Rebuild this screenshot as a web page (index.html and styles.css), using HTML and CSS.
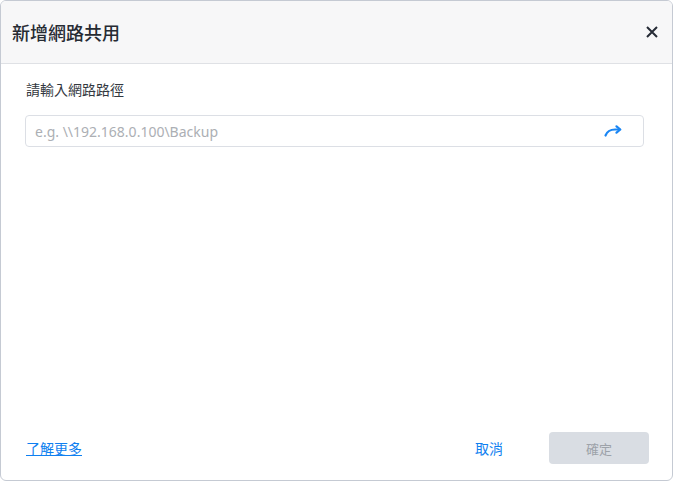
FILE: index.html
```html
<!DOCTYPE html>
<html lang="zh-Hant">
<head>
<meta charset="utf-8">
<title>新增網路共用</title>
<link rel="stylesheet" href="styles.css">
</head>
<body>
<div class="dialog">
  <div class="header">
    <div class="title">新增網路共用</div>
    <button class="close" aria-label="close">
      <svg width="12" height="12" viewBox="0 0 12 12"><path d="M1 1L11 11M11 1L1 11" stroke="#262b36" stroke-width="2" fill="none"/></svg>
    </button>
  </div>
  <div class="body">
    <div class="label">請輸入網路路徑</div>
    <div class="input">
      <span class="placeholder">e.g. \\192.168.0.100\Backup</span>
      <svg class="go" width="18" height="12" viewBox="0 0 18 12"><path d="M1.5 10.5C3 6.5 6 4.5 11 4.5H15.5" stroke="#1a86f4" stroke-width="2.2" fill="none" stroke-linecap="round"/><path d="M12.5 1.3L16.3 4.5L12.5 7.7" stroke="#1a86f4" stroke-width="2.2" fill="none" stroke-linecap="round" stroke-linejoin="round"/></svg>
    </div>
  </div>
  <div class="footer">
    <a class="more" href="#">了解更多</a>
    <div class="actions">
      <button class="cancel">取消</button>
      <button class="ok">確定</button>
    </div>
  </div>
</div>
</body>
</html>
```

FILE: styles.css
```css
html, body {
  margin: 0;
  padding: 0;
  background: #ffffff;
}
body {
  font-family: "Noto Sans", "Noto Sans CJK TC", sans-serif;
}
.dialog {
  box-sizing: border-box;
  width: 673px;
  height: 481px;
  border: 1px solid #c5cad3;
  border-radius: 6px;
  overflow: hidden;
  display: flex;
  flex-direction: column;
  background: #fff;
}
.header {
  height: 62px;
  flex: none;
  background: #f7f7f8;
  border-bottom: 1px solid #dfe1e5;
  display: flex;
  align-items: center;
  justify-content: space-between;
  padding: 0 14px 0 11px;
}
.title {
  font-family: "Noto Sans CJK TC", sans-serif;
  font-size: 18px;
  font-weight: 500;
  color: #262b33;
  line-height: 24px;
}
.close {
  border: 0;
  background: none;
  padding: 0;
  width: 12px;
  height: 12px;
  display: flex;
}
.body {
  flex: 1;
  padding: 16px 28px 0 24px;
}
.label {
  font-family: "Noto Sans CJK TC", sans-serif;
  font-size: 14px;
  line-height: 18px;
  color: #333840;
  margin-left: 1px;
}
.input {
  box-sizing: border-box;
  margin-top: 17px;
  height: 32px;
  border: 1px solid #dcdfe5;
  border-radius: 4px;
  display: flex;
  align-items: center;
  justify-content: space-between;
  padding: 0 21px 0 9px;
}
.placeholder {
  font-size: 14px;
  color: #acafb4;
}
.footer {
  flex: none;
  display: flex;
  align-items: center;
  justify-content: space-between;
  padding: 0 23px 16px 25px;
}
.more {
  font-family: "Noto Sans CJK TC", sans-serif;
  font-size: 14px;
  color: #0f7ff0;
  text-decoration: underline;
}
.actions {
  display: flex;
  align-items: center;
  gap: 30px;
}
button {
  font-family: "Noto Sans CJK TC", sans-serif;
  font-size: 13px;
  cursor: pointer;
}
.cancel {
  border: 0;
  background: none;
  color: #0f7ff0;
  font-size: 14px;
  width: 60px;
  height: 32px;
  padding: 0;
}
.ok {
  border: 0;
  background: #d9dde3;
  color: #9da2a9;
  width: 100px;
  height: 32px;
  border-radius: 4px;
  padding: 0;
}
```
